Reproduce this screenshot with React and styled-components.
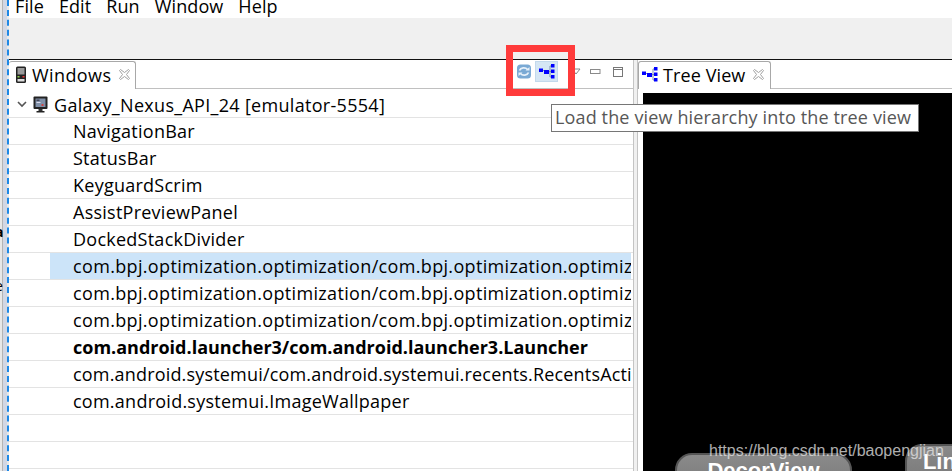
import React from 'react';
import styled, { createGlobalStyle } from 'styled-components';

const Global = createGlobalStyle`
  html, body { margin: 0; padding: 0; width: 952px; height: 471px; overflow: hidden; background: #fff; }
  * { box-sizing: border-box; }
`;
const Page = styled.div`
  position: relative; width: 952px; height: 471px; overflow: hidden; display: flex;
  font-family: "Open Sans", "Noto Sans", sans-serif; font-size: 18px; color: #000;
`;
const Gutter = styled.div`
  width: 9px; flex: none; background: linear-gradient(90deg, #e8e8e8 0 2px, #b4b4b4 2px 3px, #d2d7e4 3px);
  border-right: 2px dashed #1e88e5;
  display: flex; flex-direction: column; padding-top: 218px; font-size: 14px; line-height: 27px; overflow: hidden;
`;
const GutterChar = styled.span`
  margin-left: -5px; font-weight: ${p => (p.$bold ? 700 : 400)};
`;
const Main = styled.div`flex: 1; min-width: 0; display: flex; flex-direction: column;`;
const MenuBar = styled.div`
  height: 18px; flex: none; background: #fff; display: flex; gap: 15px; padding-left: 6px;
  line-height: 12px; overflow: hidden; align-items: flex-start; letter-spacing: 0.1px;
`;
const Toolbar = styled.div`height: 42px; flex: none; background: #f0f0f0; border-bottom: 1px solid #111;`;
const Panes = styled.div`flex: 1; min-height: 0; display: flex;`;
const LeftPane = styled.div`width: 624px; flex: none; display: flex; flex-direction: column; overflow: hidden;`;
const TabStrip = styled.div`
  height: 29px; flex: none; display: flex; align-items: flex-start; position: relative;
  border-bottom: 1px solid #c0c0c0; background: #fff;
`;
const Tab = styled.div`
  height: 28px; width: ${p => p.$w}px; flex: none; display: flex; align-items: center; gap: 5px; padding: 0 0 2px ${p => p.$pad}px;
  background: #fff; border: 1px solid #a8a8a8; border-bottom: none; border-left: ${p => (p.$left ? '1px solid #a8a8a8' : 'none')};
  border-radius: 3px 3px 0 0; margin-top: 1px; white-space: nowrap; font-size: 18px; letter-spacing: ${p => p.$ls}px;
`;
const TabLabel = styled.span`margin-right: 3px;`;
const ViewButtons = styled.div`
  margin-left: auto; margin-top: 1px; display: flex; align-items: center; height: 21px; padding-right: 1px;
`;
const IconSlot = styled.div`
  width: ${p => p.$w}px; height: 21px; flex: none; margin-left: ${p => p.$ml || 0}px;
  display: flex; align-items: center; justify-content: center;
  background: ${p => (p.$on ? '#d5e6f4' : 'transparent')};
  border: 1px solid ${p => (p.$on ? '#c3d9ec' : 'transparent')};
`;
const Tree = styled.div`flex: 1; min-height: 0; display: flex; flex-direction: column;`;
const HeadRow = styled.div`
  height: 29px; flex: none; display: flex; align-items: center; padding: 3px 0 0 8px; gap: 6px;
  border-bottom: 1px solid #e3e3e3; white-space: nowrap; letter-spacing: 0.3px;
`;
const Row = styled.div`
  height: 27px; flex: none; border-bottom: 1px solid #e3e3e3; display: flex; align-items: center;
  white-space: nowrap; overflow: hidden; padding: 0 2px 0 41px;
  font-weight: ${p => (p.$bold ? 700 : 400)};
`;
const RowText = styled.span`
  display: flex; align-items: center; height: 26px; flex: 1; min-width: 0; overflow: hidden; padding-left: 23px;
  background: ${p => (p.$sel ? '#cce4f9' : 'transparent')};
  letter-spacing: ${p => p.$ls}px;
`;
const Sash = styled.div`
  width: 5px; flex: none; background: #f0f0f0; border-left: 1px solid #c4c4c4; border-right: 1px solid #c4c4c4;
`;
const RightPane = styled.div`flex: 1; min-width: 0; display: flex; flex-direction: column; overflow: hidden;`;
const Canvas = styled.div`flex: 1; position: relative; background: #000; margin: 4px 0 0 5px; overflow: hidden;`;
const Node = styled.div`
  position: absolute; left: ${p => p.$x}px; top: ${p => p.$y}px; width: ${p => p.$w}px; height: 60px;
  border: 2px solid #555; border-radius: 17px 17px 0 0; background: linear-gradient(#8a8a8a, #6f6f6f);
  color: #fff; font-weight: 700; font-size: 22px; text-align: center; line-height: 23px; padding-top: 4px; overflow: hidden;
  white-space: nowrap; font-family: "Liberation Sans", sans-serif;
`;
const Tooltip = styled.div`
  position: absolute; left: 551px; top: 104px; width: 368px; height: 28px; background: #fff;
  border: 1px solid #767676; color: #575757; padding-left: 3px; line-height: 25px; white-space: nowrap;
  letter-spacing: 0.14px;
`;
const Highlight = styled.div`
  position: absolute; left: 506px; top: 45px; width: 69px; height: 51px; border: 7px solid #ff3b3b;
`;
const Watermark = styled.div`
  position: absolute; left: 709px; top: 442px; font-family: "Liberation Sans", sans-serif; font-size: 16px;
  color: rgba(225,225,225,.78); white-space: nowrap;
`;

const Phone = () => (
  <svg width="12" height="18" viewBox="0 0 12 18">
    <rect x="1" y="0.5" width="10" height="16.5" rx="1.5" fill="#222" />
    <rect x="2.5" y="2" width="7" height="6.5" fill="#9a9a9a" />
    <rect x="2.5" y="10" width="2" height="1.5" fill="#8fd14f" />
    <rect x="7.5" y="10" width="2" height="1.5" fill="#e33" />
    <rect x="2.5" y="13" width="7" height="2.5" fill="#ddd" />
  </svg>
);
const Monitor = () => (
  <svg width="15" height="17" viewBox="0 0 15 17">
    <rect x="0.5" y="0.5" width="14" height="12.5" rx="1" fill="#222" />
    <rect x="2.5" y="2.5" width="10" height="8.5" fill="#8090a8" />
    <rect x="3.5" y="3.5" width="3" height="1.5" fill="#445" /><rect x="3.5" y="6" width="4" height="1" fill="#dde" />
    <rect x="8.5" y="8" width="2" height="2" fill="#c44" />
    <rect x="5.5" y="13" width="4" height="2" fill="#333" /><rect x="3.5" y="15" width="8" height="1.5" fill="#222" />
  </svg>
);
const Close = () => (
  <svg width="11" height="11" viewBox="0 0 11 11" fill="#fff" stroke="#a0a0a0" strokeWidth="1">
    <path d="M1.5 .5 L5.5 3.5 L9.5 .5 L10.5 1.5 L7.5 5.5 L10.5 9.5 L9.5 10.5 L5.5 7.5 L1.5 10.5 L.5 9.5 L3.5 5.5 L.5 1.5 Z" />
  </svg>
);
const TreeIcon = () => (
  <svg width="16" height="15" viewBox="0 0 16 15">
    <path d="M4 6.5H6M9 7.5H13M11 2V13M11 2H13M11 13H13" stroke="#7f93ad" fill="none" />
    <rect x="0" y="4.5" width="4" height="3.5" fill="#00f" /><rect x="5" y="6" width="5" height="4" fill="#00f" />
    <rect x="12" y="0" width="3.5" height="3.5" fill="#00f" /><rect x="12" y="5.5" width="3.5" height="3.5" fill="#00f" />
    <rect x="12" y="11" width="3.5" height="3.5" fill="#00f" />
  </svg>
);
const Refresh = () => (
  <svg width="14" height="15" viewBox="0 0 14 15">
    <rect x="0" y="0.5" width="14" height="14" rx="3.5" fill="#7aa9d4" />
    <path d="M2.5 6.5C3.5 3.5 8.5 3 10.5 5.5M11.5 8.5C10.5 11.5 5.5 12 3.5 9.5" stroke="#e6f0f9" strokeWidth="1.7" fill="none" />
    <path d="M8.5 6.5H12.5V3ZM5.5 8.5H1.5V12Z" fill="#e6f0f9" />
  </svg>
);
const Chevron = () => (
  <svg width="10" height="7" viewBox="0 0 10 7"><path d="M1 1 L5 5 L9 1" fill="none" stroke="#555" strokeWidth="1.6" /></svg>
);
const ViewMenu = () => (
  <svg width="10" height="8" viewBox="0 0 10 8"><path d="M1 1H9L5 6Z" fill="#fff" stroke="#8a8a8a" /></svg>
);
const Minimize = () => (
  <svg width="11" height="6" viewBox="0 0 11 6"><rect x="0.5" y="0.5" width="9.5" height="4" fill="#fff" stroke="#8a8a8a" /></svg>
);
const Maximize = () => (
  <svg width="10" height="10" viewBox="0 0 10 10"><rect x="0.5" y="0.5" width="9" height="9" fill="#fff" stroke="#777" /><path d="M0 2.5H10" stroke="#777" /></svg>
);

const menus = ['File', 'Edit', 'Run', 'Window', 'Help'];
const BPJ = 'com.bpj.optimization.optimization/com.bpj.optimization.optimization.MainActivity';
const rows = [
  { t: 'NavigationBar', ls: 0.25 }, { t: 'StatusBar', ls: 0.25 }, { t: 'KeyguardScrim', ls: 0.25 },
  { t: 'AssistPreviewPanel', ls: 0.25 }, { t: 'DockedStackDivider', ls: 0.25 },
  { t: BPJ, ls: 0.34, sel: true }, { t: BPJ, ls: 0.34 }, { t: BPJ, ls: 0.34 },
  { t: 'com.android.launcher3/com.android.launcher3.Launcher', ls: 0, bold: true },
  { t: 'com.android.systemui/com.android.systemui.recents.RecentsActivity', ls: 0.18 },
  { t: 'com.android.systemui.ImageWallpaper', ls: 0.25 },
  { t: '', ls: 0 }, { t: '', ls: 0 }, { t: '', ls: 0 },
];

export default function App() {
  return (
    <Page>
      <Global />
      <Gutter>
        <GutterChar $bold>a</GutterChar>
        <GutterChar $bold>l</GutterChar>
        <GutterChar>e</GutterChar>
      </Gutter>
      <Main>
        <MenuBar>{menus.map(m => <span key={m}>{m}</span>)}</MenuBar>
        <Toolbar />
        <Panes>
          <LeftPane>
            <TabStrip>
              <Tab $w={127} $pad={6} $ls={0.4}>
                <Phone /><TabLabel>Windows</TabLabel><Close />
              </Tab>
              <ViewButtons>
                <IconSlot $w={23}><Refresh /></IconSlot>
                <IconSlot $w={23} $on><TreeIcon /></IconSlot>
                <IconSlot $w={22} $ml={7}><ViewMenu /></IconSlot>
                <IconSlot $w={16}><Minimize /></IconSlot>
                <IconSlot $w={28} $ml={1}><Maximize /></IconSlot>
              </ViewButtons>
            </TabStrip>
            <Tree>
              <HeadRow><Chevron /><Monitor /><span>Galaxy_Nexus_API_24 [emulator-5554]</span></HeadRow>
              {rows.map((r, i) => (
                <Row key={i} $bold={r.bold}>
                  <RowText $sel={r.sel} $ls={r.ls}>{r.t}</RowText>
                </Row>
              ))}
            </Tree>
          </LeftPane>
          <Sash />
          <RightPane>
            <TabStrip>
              <Tab $w={133} $pad={3} $ls={0.1} $left>
                <TreeIcon /><TabLabel>Tree View</TabLabel><Close />
              </Tab>
            </TabStrip>
            <Canvas>
              <Node $x={32} $y={360} $w={177}>DecorView</Node>
              <Node $x={262} $y={351} $w={174}>LinearLayout</Node>
            </Canvas>
          </RightPane>
        </Panes>
      </Main>
      <Highlight />
      <Tooltip>Load the view hierarchy into the tree view</Tooltip>
      <Watermark>https://blog.csdn.net/baopengjian</Watermark>
    </Page>
  );
}
